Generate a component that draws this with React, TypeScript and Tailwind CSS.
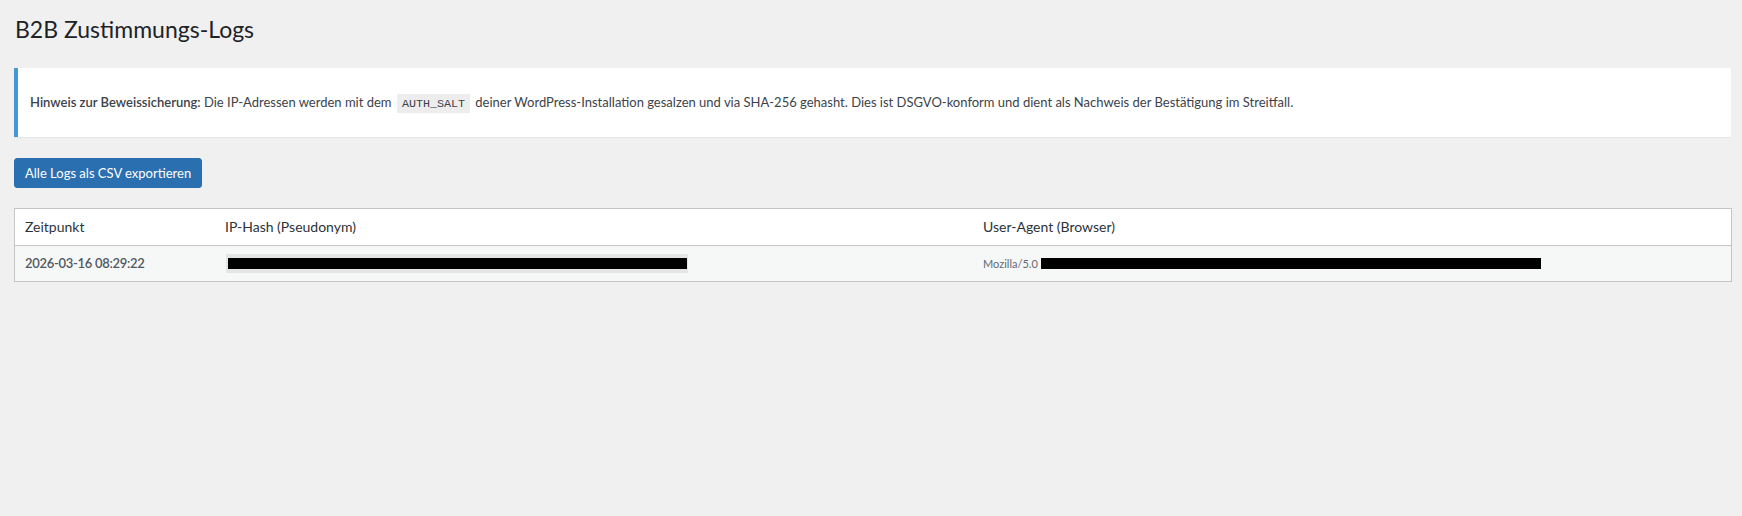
import { FunctionComponent } from "react";

const font = "font-['Lato','Noto_Sans',sans-serif]";

const App: FunctionComponent = () => {
  return (
    <div className={`min-h-screen w-full bg-[#f0f0f1] ${font} text-[#3c434a]`}>
      <div className="pl-[14px] pr-[10px] pt-[15px] flex flex-col items-stretch">
        <h1 className="ml-[1px] text-[23px] leading-[29px] font-normal text-[#1d2327]">
          B2B Zustimmungs-Logs
        </h1>

        <div className="mt-[24px] mr-[1px] h-[69px] flex items-center bg-white border-l-4 border-[#4299d4] shadow-[0_1px_1px_rgba(0,0,0,0.04)] px-[12px]">
          <p className="text-[13px] leading-[21px] whitespace-nowrap">
            <strong className="font-semibold">Hinweis zur Beweissicherung:</strong>{" "}
            Die IP-Adressen werden mit dem{" "}
            <code className="bg-black/[0.07] px-[5px] pt-[3px] pb-[2px] mx-[2px] text-[11.7px] leading-none font-['Liberation_Mono',monospace]">
              AUTH_SALT
            </code>{" "}
            deiner WordPress-Installation gesalzen und via SHA-256 gehasht. Dies ist
            DSGVO-konform und dient als Nachweis der Bestätigung im Streitfall.
          </p>
        </div>

        <div className="mt-[21px] flex">
          <button className="h-[30px] px-[10px] rounded-[3px] border border-[#2a70b0] bg-[#2a70b0] text-white text-[13px] leading-[28px]">
            Alle Logs als CSV exportieren
          </button>
        </div>

        <div className="mt-[20px] border border-[#c3c4c7] bg-white">
          <div className="grid grid-cols-[200px_1fr_1fr] border-b border-[#c3c4c7] text-[14px] leading-[19.6px] text-[#2c3338]">
            <div className="px-[10px] py-[8px]">Zeitpunkt</div>
            <div className="px-[10px] py-[8px]">IP-Hash (Pseudonym)</div>
            <div className="px-[10px] py-[8px]">User-Agent (Browser)</div>
          </div>
          <div className="grid grid-cols-[200px_1fr_1fr] bg-[#f6f7f7] text-[13px] leading-[19.5px] text-[#50575e]">
            <div className="px-[10px] py-[8px] font-semibold tracking-[-0.3px]">2026-03-16 08:29:22</div>
            <div className="px-[10px] py-[8px] flex items-center">
              <span className="ml-[1px] inline-flex items-center h-[19px] w-[462px] bg-black/[0.07] pl-[2px]">
                <span className="block h-[11px] w-[459px] bg-black" />
              </span>
            </div>
            <div className="px-[10px] py-[8px] flex items-center gap-[3px]">
              <span className="text-[11px] text-[#646970]">Mozilla/5.0</span>
              <span className="block h-[11px] w-[500px] bg-black" />
            </div>
          </div>
        </div>
      </div>
    </div>
  );
};

export default App;
